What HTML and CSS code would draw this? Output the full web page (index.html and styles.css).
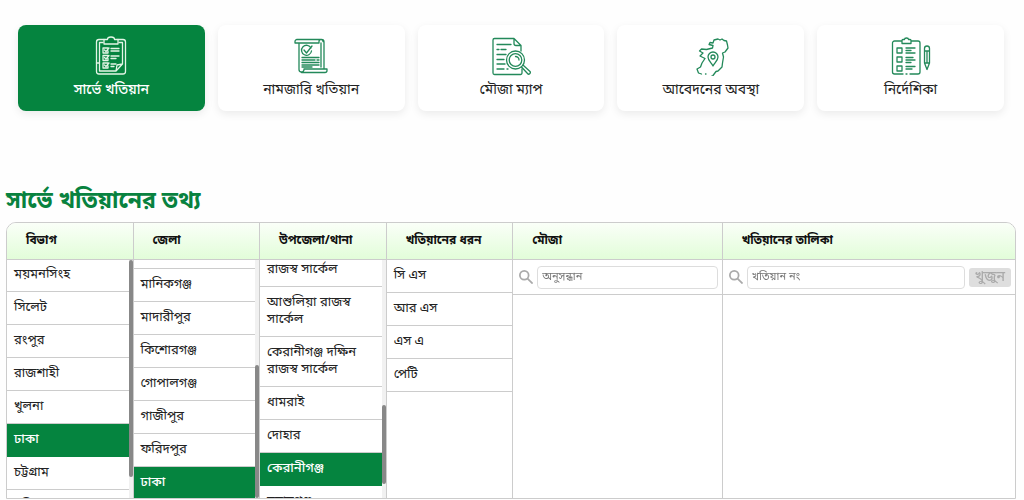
FILE: index.html
```
<!doctype html>
<html lang="bn">
    <head>
        <meta charset="utf-8" />
        <meta name="viewport" content="width=device-width, initial-scale=1" />
        <title>সার্ভে খতিয়ান</title>
        <link rel="stylesheet" href="styles.css">
    </head>
    <body>
        <nav class="tabs">
            <a href="#survey" class="tab active">
                <svg class="icon" viewBox="0 0 40 40">
                    <path d="M13 3.500H8A2.500 2.500 0 0 0 5.500 6v29.500A2.500 2.500 0 0 0 8 38h24a2.500 2.500 0 0 0 2.500-2.500V6A2.500 2.500 0 0 0 32 3.500h-5" />
                    <path d="M12 6.500H8.500v28.500H25l6.500-7V6.500H28M25 35l1-6 5.500-1M8.500 27h-3" />
                    <path d="M13 8V3.500h3.500a3.500 2.500 0 0 1 7 0H27V8z" />
                    <path d="M17 12h-5v5h5v-2M13.500 14l1.500 1.500 3-3.500M17 19.500h-5v5h5v-2M13.500 21.500L15 23l3-3.500M17 27h-5v5h5v-2M13.500 29l1.500 1.500 3-3.500M20 12.500h8M20 15h8M20 20h8M20 22.500h5M20 28h5M20 30.500h3" />
                </svg>
                <span>সার্ভে খতিয়ান</span>
            </a>
            <a href="#mutation" class="tab">
                <svg class="icon" viewBox="0 0 40 40">
                    <path d="M8 7H4V5.500A2 2 0 0 1 6 3.500h24.500a2.500 2.500 0 0 1 2.500 2.500V33M8 7h20V5.500a2 2 0 0 1 4 0M8 7v26.500a2.500 2.500 0 0 0 5 0V33h23v1.500a2 2 0 0 1-2 2H10.500M30 7v24" />
                    <path d="M20 12a5 5 0 1 0 .500 3M13 14l2.500 3 5.500-7" />
                    <path d="M11 21.500h17M11 24h13M26 24h2M11 26.500h17M11 29h17M11 31h10" />
                </svg>
                <span>নামজারি খতিয়ান</span>
            </a>
            <a href="#map" class="tab">
                <svg class="icon" viewBox="0 0 40 40">
                    <path d="M23 2.500H3.500A1.500 1.500 0 0 0 2 4v33a1.500 1.500 0 0 0 1.500 1.500h26A1.500 1.500 0 0 0 31 37v-4M30 15v-5.500l-7-7v5a2 2 0 0 0 2 2h5" />
                    <path d="M6 8.500h14M6 13.500h2M10 13.500h5M6 18.500h9M6 23.500h7M6 28h8M6 33h7M16 33h1" />
                    <circle cx="24.500" cy="24" r="9" />
                    <circle cx="24.500" cy="24" r="6.300" />
                    <path d="M24.500 20.500a3.500 3.500 0 0 1 3.500 3.500M30.500 31l6 6.500a1.500 1.500 0 0 0 2.500-2L32.500 29.500" />
                </svg>
                <span>মৌজা ম্যাপ</span>
            </a>
            <a href="#status" class="tab">
                <svg class="icon" viewBox="0 0 40 40">
                    <path d="M10.500 38l-3-1-1.500-4 3.500-2 1.500-4 3-4.500-5-2.500 3-3-3.500-2 2-2 5 .500 6-1.500.500-2.500-4-1 1-2 3 .500 1-3 4-1 2 1 2-1 2 1.500 2.500.500 1 4 .500 3-3 4-2.500 1 1 4-1 6-.500 4-4 4-2 .500-3 4-2 1M15 38h-.500" />
                    <path d="M22 30c-2.500-4-5-6-5-9a5 5 0 0 1 10 0c0 3-2.500 5-5 9z" />
                    <circle cx="22" cy="21" r="2" />
                </svg>
                <span>আবেদনের অবস্থা</span>
            </a>
            <a href="#guide" class="tab">
                <svg class="icon" viewBox="0 0 40 40">
                    <path d="M11 5H3.500A2 2 0 0 0 1.500 7v29a2 2 0 0 0 2 2H12M15 38h1M19 38h8a2 2 0 0 0 2-2V7a2 2 0 0 0-2-2h-7M11 4.500a1 1 0 0 1 1-1h1.500a2 1.500 0 0 1 4 0H19a1 1 0 0 1 1 1V7.500h-9z" />
                    <path d="M6 12h5v5H6zM6 21h5v5H6zM6 30h5v5H6zM15 12h9M15 14.500h5M15 17h9M15 21.500h7M15 24h9M15 26.500h5M15 30.500h9M15 33h6" />
                    <path d="M33.500 27V12.500a2.500 2.500 0 0 1 5 0V27L36 33.500zM33.500 15h5M33.500 27h5M36 15v12" />
                </svg>
                <span>নির্দেশিকা</span>
            </a>
        </nav>

        <main class="survey" id="survey">
            <h1>সার্ভে খতিয়ানের তথ্য</h1>

            <div class="panel">
                <section class="column">
                    <h2>বিভাগ</h2>
                    <div class="scroller">
                        <ul class="list" data-scroll="1">
                            <li><button>ময়মনসিংহ</button></li>
                            <li><button>সিলেট</button></li>
                            <li><button>রংপুর</button></li>
                            <li><button>রাজশাহী</button></li>
                            <li><button>খুলনা</button></li>
                            <li><button class="selected">ঢাকা</button></li>
                            <li><button>চট্টগ্রাম</button></li>
                            <li><button>বরিশাল</button></li>
                        </ul>
                        <div class="bar"><div class="thumb thumb-division"></div></div>
                    </div>
                </section>

                <section class="column">
                    <h2>জেলা</h2>
                    <div class="scroller">
                        <ul class="list" data-scroll="24">
                            <li><button>মুন্সিগঞ্জ</button></li>
                            <li><button>মানিকগঞ্জ</button></li>
                            <li><button>মাদারীপুর</button></li>
                            <li><button>কিশোরগঞ্জ</button></li>
                            <li><button>গোপালগঞ্জ</button></li>
                            <li><button>গাজীপুর</button></li>
                            <li><button>ফরিদপুর</button></li>
                            <li><button class="selected">ঢাকা</button></li>
                        </ul>
                        <div class="bar"><div class="thumb thumb-district"></div></div>
                    </div>
                </section>

                <section class="column">
                    <h2>উপজেলা/থানা</h2>
                    <div class="scroller">
                        <ul class="list" data-scroll="23">
                            <li><button>আমিনবাজার রাজস্ব সার্কেল</button></li>
                            <li><button>আশুলিয়া রাজস্ব সার্কেল</button></li>
                            <li><button>কেরানীগঞ্জ দক্ষিন রাজস্ব সার্কেল</button></li>
                            <li><button>ধামরাই</button></li>
                            <li><button>দোহার</button></li>
                            <li><button class="selected">কেরানীগঞ্জ</button></li>
                            <li><button>নবাবগঞ্জ</button></li>
                        </ul>
                        <div class="bar"><div class="thumb thumb-upazila"></div></div>
                    </div>
                </section>

                <section class="column">
                    <h2>খতিয়ানের ধরন</h2>
                    <div class="scroller">
                        <ul class="list" data-scroll="0">
                            <li><button>সি এস</button></li>
                            <li><button>আর এস</button></li>
                            <li><button>এস এ</button></li>
                            <li><button>পেটি</button></li>
                        </ul>
                    </div>
                </section>

                <section class="column">
                    <h2>মৌজা</h2>
                    <form class="search">
                        <label for="mouza" aria-label="অনুসন্ধান">
                            <svg viewBox="0 0 16 16"><circle cx="6" cy="6" r="5" /><path d="M9.500 9.500l6 6" /></svg>
                        </label>
                        <input id="mouza" type="text" placeholder="অনুসন্ধান" />
                    </form>
                </section>

                <section class="column">
                    <h2>খতিয়ানের তালিকা</h2>
                    <form class="search">
                        <label for="khatian" aria-label="খতিয়ান নং">
                            <svg viewBox="0 0 16 16"><circle cx="6" cy="6" r="5" /><path d="M9.500 9.500l6 6" /></svg>
                        </label>
                        <input id="khatian" type="text" placeholder="খতিয়ান নং" />
                        <button disabled>খুজুন</button>
                    </form>
                </section>
            </div>
        </main>

        <script>
        (function() {
            var lists = document.querySelectorAll('.list');

            for (var i = 0; i < lists.length; i++) {
                lists[i].scrollTop = lists[i].getAttribute('data-scroll');
            }
        })();
        </script>
    </body>
</html>
```
FILE: styles.css
```
* {
    margin: 0;
    padding: 0;
    box-sizing: border-box;
}

body {
    display: flex;
    flex-direction: column;
    height: 100vh;
    min-height: 400px;
    padding-bottom: 1px;
    background: #fefefe;
    color: #222;
    font-family: "Noto Sans Bengali", "Noto Sans", sans-serif;
    font-size: 13px;
}

button, input {
    font: inherit;
}

.tabs {
    display: grid;
    grid-template-columns: repeat(5, 1fr);
    gap: 13px;
    padding: 25px 20px 0 18px;
}

.tab {
    display: flex;
    flex-direction: column;
    align-items: center;
    height: 86px;
    padding-top: 11px;
    border-radius: 8px;
    background: #fff;
    box-shadow: 0 3px 8px rgba(0, 0, 0, 0.08);
    color: #222;
    font-size: 14px;
    line-height: 30px;
    text-decoration: none;
}

.tab.active {
    background: #05843f;
    color: #fff;
    font-weight: 500;
}

.icon {
    width: 40px;
    height: 40px;
    fill: none;
    stroke: #23895a;
    stroke-width: 1.3;
    stroke-linejoin: round;
    stroke-linecap: round;
}

.active .icon {
    stroke: #e3f5e6;
}

.survey {
    display: flex;
    flex: 1;
    flex-direction: column;
    min-height: 0;
    padding: 73px 8px 0 6px;
}

h1 {
    margin-bottom: 2px;
    color: #08823f;
    font-size: 23px;
    line-height: 36px;
}

.panel {
    display: grid;
    flex: 1;
    grid-template-columns: 29fr 29fr 29fr 29fr 48fr 67fr;
    min-height: 0;
    overflow: hidden;
    border: 1px solid #ccc;
    border-radius: 10px 10px 0 0;
    background: #fff;
}

.column {
    display: flex;
    flex-direction: column;
    min-width: 0;
    min-height: 0;
    border-right: 1px solid #ccc;
}

.column:last-child {
    border-right: 0;
}

h2 {
    flex: none;
    height: 37px;
    padding-left: 19px;
    border-bottom: 1px solid #ccc;
    background: linear-gradient(#fafff8, #e2fdd9);
    color: #111;
    font-size: 12px;
    line-height: 36px;
}

.scroller {
    display: flex;
    flex: 1;
    min-height: 0;
}

.list {
    flex: 1;
    min-width: 0;
    overflow-y: auto;
    list-style: none;
    scrollbar-width: none;
}

.list button {
    display: block;
    width: 100%;
    padding: 7px 20px 8px 7px;
    border: 0;
    border-bottom: 1px solid #ccc;
    background: #fff;
    color: #222;
    line-height: 17px;
    text-align: left;
    cursor: pointer;
}

.list .selected {
    border-bottom-color: #05843f;
    background: #05843f;
    color: #fff;
    font-weight: 500;
}

.bar {
    display: flex;
    flex-direction: column;
    width: 4px;
    background: #f1f1f1;
}

.thumb {
    border-radius: 2px;
    background: #888;
}

.thumb-division {
    height: 91%;
}

.thumb-district {
    height: 56%;
    margin-top: auto;
}

.thumb-upazila {
    height: 33%;
    margin-top: auto;
    margin-bottom: 14px;
}

.search {
    display: flex;
    align-items: center;
    gap: 4px;
    height: 35px;
    padding: 0 4px 0 6px;
    border-bottom: 1px solid #ccc;
}

.search svg {
    display: block;
    width: 14px;
    height: 14px;
    fill: none;
    stroke: #aaa;
    stroke-width: 2;
}

.search input {
    flex: 1;
    min-width: 0;
    height: 23px;
    padding: 0 4px;
    border: 1px solid #ddd;
    border-radius: 4px;
    background: #fff;
    font-size: 11px;
}

.search input::placeholder {
    color: #777;
}

.search button {
    height: 19px;
    padding: 0 6px;
    border: 0;
    border-radius: 3px;
    background: #dedede;
    color: #aaa;
    font-weight: 500;
    font-size: 14px;
    line-height: 17px;
}
```
